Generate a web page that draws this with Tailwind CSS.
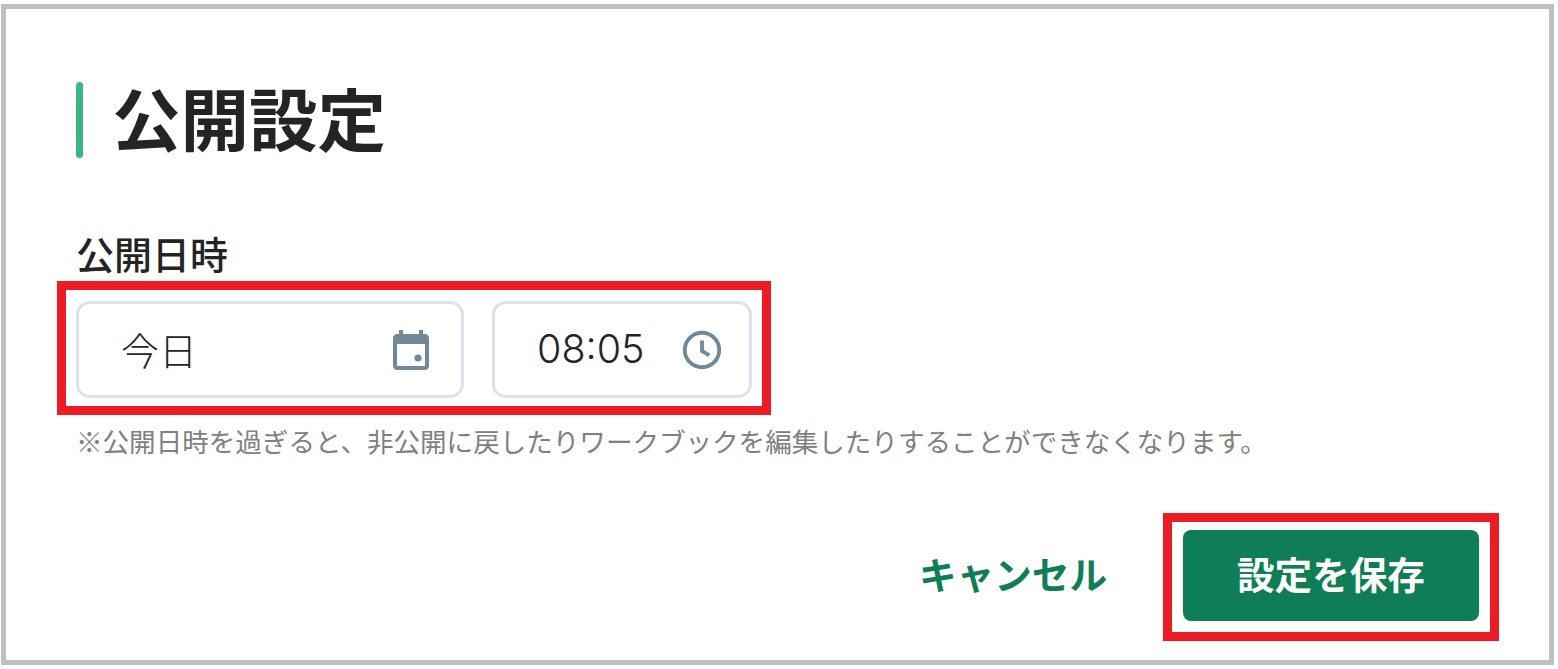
<!DOCTYPE html>
<html lang="ja">
<head>
<meta charset="utf-8">
<script src="https://cdn.jsdelivr.net/npm/@tailwindcss/browser@4"></script>
</head>
<body class="bg-white font-['Noto_Sans_CJK_JP','Noto_Sans',sans-serif] text-[#242424]">
<div class="w-[1558px] h-[669px] overflow-hidden pl-px pt-1">
  <div class="w-[1553px] h-[661px] border-[5px] border-[#c0c0c0] bg-white pl-[70px] pr-[50px] pt-[73px]">
    <div class="flex items-center gap-[29px]">
      <div class="w-[7px] h-[76px] rounded-full bg-[#3cb67e]"></div>
      <h1 class="text-[68.500px] leading-[70px] font-bold pb-[6px]">公開設定</h1>
    </div>
    <div class="mt-[76px] text-[38px] leading-[38px] font-medium">公開日時</div>
    <div class="mt-[9px] -ml-[19px] w-[714px] h-[134px] border-[9px] border-[#ed1c24] pl-[10px] pr-[10px] pt-[11px] flex gap-[28px]">
      <div class="w-[388px] h-[97px] border-[3px] border-[#dbe3ea] rounded-[14px] flex items-center justify-between pl-[42px] pr-[26px]">
        <span class="text-[38px] font-light pb-[2px]">今日</span>
        <svg class="w-[48px] h-[48px]" viewBox="0 0 24 24" fill="#718898"><path d="M19 4h-1V2h-2v2H8V2H6v2H5c-1.1 0-2 .9-2 2v14c0 1.1.9 2 2 2h14c1.1 0 2-.9 2-2V6c0-1.100-.9-2-2-2zm0 16H5V9h14v11z"/><circle cx="15.500" cy="16" r="1.800"/></svg>
      </div>
      <div class="w-[260px] h-[97px] border-[3px] border-[#dbe3ea] rounded-[14px] flex items-center justify-between pl-[42px] pr-[24px]">
        <span class="text-[39.500px] font-light font-['Inter',sans-serif]">08:05</span>
        <svg class="w-[46px] h-[46px]" viewBox="0 0 24 24" fill="none" stroke="#718898" stroke-width="2"><circle cx="12" cy="12" r="9"/><path d="M12 7v5.500l3.800 2.300"/></svg>
      </div>
    </div>
    <p class="mt-[8px] text-[26.550px] leading-[36px] text-[#808080] whitespace-nowrap">※公開日時を過ぎると、非公開に戻したりワークブックを編集したりすることができなくなります。</p>
    <div class="mt-[54px] flex items-center justify-end gap-[56px]">
      <button class="text-[37.600px] font-bold text-[#0f7d55] pb-[8px]">キャンセル</button>
      <div class="border-[9px] border-[#ed1c24] px-[11px] pt-[8px] pb-[11px]">
        <button class="block w-[296px] h-[91px] pb-[4px] rounded-[8px] bg-[#0f7d55] text-white text-[37.600px] font-bold">設定を保存</button>
      </div>
    </div>
  </div>
</div>
</body>
</html>
